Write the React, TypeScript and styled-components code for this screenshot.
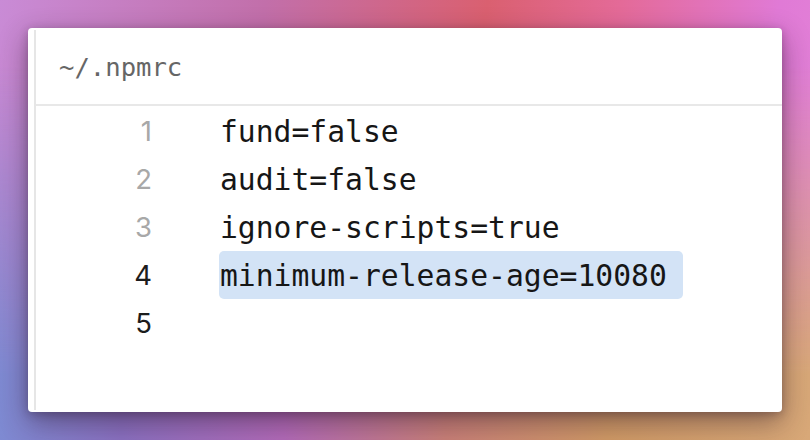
import React from "react";
import styled, { createGlobalStyle } from "styled-components";

const Global = createGlobalStyle`
  html, body { margin: 0; padding: 0; }
  body { width: 810px; height: 440px; overflow: hidden; }
`;

const Page = styled.div`
  position: relative;
  width: 810px;
  height: 440px;
  box-sizing: border-box;
  padding: 28px;
  background: linear-gradient(100deg, #c98bd6 0%, #c26faa 30%, #da6070 55%, #e46a98 70%, #e07ad6 88%, #e486d8 100%);
  overflow: hidden;
  &::before {
    content: "";
    position: absolute;
    inset: 0;
    background: linear-gradient(90deg, #7e8ad2 0%, #8a70c0 15%, #b26ab8 35%, #c98078 55%, #d09a66 75%, #d8a878 100%);
    -webkit-mask-image: linear-gradient(to bottom, transparent 15%, #000 85%);
    mask-image: linear-gradient(to bottom, transparent 15%, #000 85%);
  }
`;

const Card = styled.div`
  position: relative;
  z-index: 1;
  width: 754px;
  height: 384px;
  box-sizing: border-box;
  background: #fff;
  border-radius: 4px;
  padding: 2px 0 2px 6px;
  box-shadow: 0 10px 28px rgba(40, 20, 40, 0.45), 0 2px 8px rgba(40, 20, 40, 0.25);
  display: flex;
`;

const Inner = styled.div`
  flex: 1;
  border-left: 2px solid #e6e6e6;
  display: flex;
  flex-direction: column;
`;

const Header = styled.div`
  height: 74px;
  margin-top: -2px;
  border-bottom: 2px solid #e8e8e8;
  display: flex;
  align-items: center;
  padding-left: 23px;
  font-family: "DejaVu Sans Mono", "Liberation Mono", monospace;
  font-size: 25.6px;
  color: #666;
  padding-top: 2px;
`;

const Code = styled.div`
  padding-top: 1px;
  display: flex;
  flex-direction: column;
`;

const Row = styled.div`
  height: 48px;
  display: flex;
  align-items: center;
`;

const LineNo = styled.span<{ $active: boolean }>`
  width: 116px;
  text-align: right;
  font-family: Inter, "Noto Sans", sans-serif;
  font-size: 27.5px;
  color: ${(p) => (p.$active ? "#1c1c1c" : "#a8a8a8")};
`;

const Text = styled.span<{ $hl: boolean }>`
  margin-left: 67px;
  height: 48px;
  display: inline-flex;
  align-items: center;
  padding: 0 16px 0 1px;
  border-radius: 5px;
  background: ${(p) => (p.$hl ? "#d3e3f6" : "transparent")};
  font-family: "DejaVu Sans Mono", "Liberation Mono", monospace;
  font-size: 29.7px;
  color: #161616;
  white-space: pre;
`;

const lines = [
  "fund=false",
  "audit=false",
  "ignore-scripts=true",
  "minimum-release-age=10080",
  "",
];

export default function App() {
  return (
    <>
      <Global />
      <Page>
        <Card>
          <Inner>
            <Header>~/.npmrc</Header>
            <Code>
              {lines.map((l, i) => (
                <Row key={i}>
                  <LineNo $active={i >= 3}>{i + 1}</LineNo>
                  <Text $hl={i === 3}>{l}</Text>
                </Row>
              ))}
            </Code>
          </Inner>
        </Card>
      </Page>
    </>
  );
}
